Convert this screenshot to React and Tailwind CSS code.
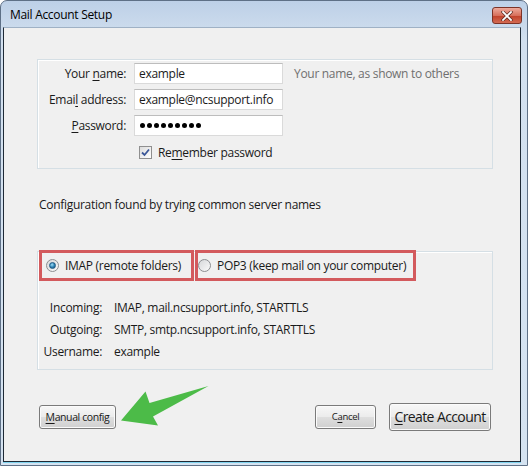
import React from "react";

const font = { fontFamily: '"Open Sans", "Noto Sans", sans-serif' };

function U({ children }) {
  return <span className="underline underline-offset-[2px]">{children}</span>;
}

function Radio({ checked }) {
  return (
    <div className="w-[13px] h-[13px] rounded-full border border-[#8c8e91] bg-[linear-gradient(135deg,#d6d8da,#fafafa)] flex items-center justify-center shrink-0">
      {checked && (
        <div className="w-[7px] h-[7px] rounded-full bg-[radial-gradient(circle_at_40%_35%,#9fe0fb,#2a7fb0_55%,#1a4f78)] border border-[#1e5a85]" />
      )}
    </div>
  );
}

function Checkbox() {
  return (
    <div className="w-[13px] h-[13px] border border-[#8f8f8f] bg-[linear-gradient(135deg,#dcdcdc,#ffffff)] flex items-center justify-center shrink-0">
      <svg width="9" height="9" viewBox="0 0 9 9">
        <path d="M1 4.5 L3.5 7 L8 1.5" fill="none" stroke="#3b5798" strokeWidth="1.8" />
      </svg>
    </div>
  );
}

const btn =
  "border border-[#7a7a7a] rounded-[3px] bg-[linear-gradient(to_bottom,#f7f7f7_0%,#ececec_48%,#dedede_52%,#d0d0d0_100%)] shadow-[inset_0_0_0_1px_#fbfbfb] flex items-center justify-center text-[#1a1a1a] whitespace-nowrap";

export default function App() {
  return (
    <div className="w-[528px] h-[466px] bg-white relative overflow-hidden" style={font}>
      <div className="w-[528px] h-[466px] rounded-t-[7px] border border-[#5e7086] bg-[linear-gradient(to_bottom,#bdd0e7,#d2e0ef_40px,#d5e3f1)] flex flex-col pl-[2px] pr-[6px] pb-[3px]">
        {/* title bar */}
        <div className="h-[26px] flex items-start justify-between shrink-0">
          <div className="text-[12px] tracking-[-0.3px] text-black pt-[6px] pl-[7px] leading-[16px] whitespace-nowrap">Mail Account Setup</div>
          <div className="mt-[6px] mr-[-1px] w-[30px] h-[17px] rounded-[3px] border border-[#7c3327] bg-[linear-gradient(to_bottom,#eeaa9c,#d7705c_50%,#c2432c_55%,#d36a52)] flex items-center justify-center">
            <svg width="12" height="10" viewBox="0 0 12 10">
              <path d="M2 1 L10 9 M10 1 L2 9" stroke="#5a2a22" strokeWidth="3.2" strokeLinecap="square" />
              <path d="M2 1 L10 9 M10 1 L2 9" stroke="#ffffff" strokeWidth="1.8" strokeLinecap="square" />
            </svg>
          </div>
        </div>

        {/* content */}
        <div className="flex-1 border border-[#1f2a36] border-t-[#9fb1c5] bg-[#f0f0f0] relative flex flex-col text-[12px] tracking-[-0.3px] text-[#1a1a1a] leading-[16px] whitespace-nowrap shadow-[0_1px_0_#7fd3ee]">
          {/* first group */}
          <div className="ml-[33px] mt-[31px] w-[456px] h-[110px] border border-[#d5dfe5] shadow-[inset_1px_1px_0_#ffffff] pt-[3px]">
            <div className="flex flex-col gap-[5px]">
              <div className="flex items-center h-[21px]">
                <div className="w-[88px] text-right">Your <U>n</U>ame:</div>
                <div className="ml-[8px] w-[149px] h-[21px] bg-white border border-[#dadada] border-t-[#bdbdbd] flex items-center pl-[4px]">example</div>
                <div className="ml-[11px] text-[#6f6f6f]">Your name, as shown to others</div>
              </div>
              <div className="flex items-center h-[21px]">
                <div className="w-[88px] text-right">Emai<U>l</U> address:</div>
                <div className="ml-[8px] w-[149px] h-[21px] bg-white border border-[#dadada] border-t-[#bdbdbd] flex items-center pl-[4px]">example@ncsupport.info</div>
              </div>
              <div className="flex items-center h-[21px]">
                <div className="w-[88px] text-right"><U>P</U>assword:</div>
                <div className="ml-[8px] w-[149px] h-[21px] bg-white border border-[#dadada] border-t-[#bdbdbd] flex items-center pl-[5px] gap-[2px]">
                  {Array.from({ length: 9 }).map((_, i) => (
                    <div key={i} className="w-[5px] h-[5px] rounded-full bg-black" />
                  ))}
                </div>
              </div>
            </div>
            <div className="flex items-center h-[15px] mt-[9px] ml-[101px] gap-[6px]">
              <Checkbox />
              <div>Re<U>m</U>ember password</div>
            </div>
          </div>

          <div className="ml-[35px] mt-[28px]">Configuration found by trying common server names</div>

          {/* second group */}
          <div className="ml-[33px] mt-[38px] w-[456px] h-[119px] border border-[#d5dfe5] shadow-[inset_1px_1px_0_#ffffff]">
            <div className="flex -mt-[2px] ml-[1px] gap-[1px]">
              <div className="w-[155px] h-[31px] border-[3px] border-[#d35a5d] flex items-center pl-[4px] gap-[6px]">
                <Radio checked />
                <div>IMAP (remote folders)</div>
              </div>
              <div className="w-[221px] h-[31px] border-[3px] border-[#d35a5d] flex items-center pl-[0px] gap-[6px]">
                <Radio />
                <div>POP3 (keep mail on your computer)</div>
              </div>
            </div>
            <div className="mt-[16px] flex flex-col">
              <div className="flex items-center h-[22px]">
                <div className="w-[64px] text-right">Incoming:</div>
                <div className="ml-[12px]">IMAP, mail.ncsupport.info, STARTTLS</div>
              </div>
              <div className="flex items-center h-[22px]">
                <div className="w-[64px] text-right">Outgoing:</div>
                <div className="ml-[12px]">SMTP, smtp.ncsupport.info, STARTTLS</div>
              </div>
              <div className="flex items-center h-[22px]">
                <div className="w-[64px] text-right">Username:</div>
                <div className="ml-[12px]">example</div>
              </div>
            </div>
          </div>

          {/* buttons */}
          <div className="mt-[33px] flex items-center justify-between pl-[35px] pr-[29px] h-[28px]">
            <div className={`${btn} w-[77px] h-[24px] text-[10.5px] tracking-[-0.4px]`}>
              <span><U>M</U>anual config</span>
            </div>
            <div className="flex items-center gap-[13px]">
              <div className={`${btn} w-[61px] h-[24px] text-[9.5px] tracking-[-0.3px]`}>
                <span>C<U>a</U>ncel</span>
              </div>
              <div className={`${btn} w-[102px] h-[28px] text-[14px] tracking-[-0.6px]`}>
                <span><U>C</U>reate Account</span>
              </div>
            </div>
          </div>

          {/* green arrow annotation */}
          <svg className="absolute left-0 top-0 pointer-events-none" width="516" height="433" viewBox="4 28 516 433">
            <polygon
              points="121,420.5 145.5,391.5 149.5,403 208.5,386 153,416.5 158,425.5"
              fill="#4cbb48"
            />
          </svg>
        </div>
      </div>
    </div>
  );
}
